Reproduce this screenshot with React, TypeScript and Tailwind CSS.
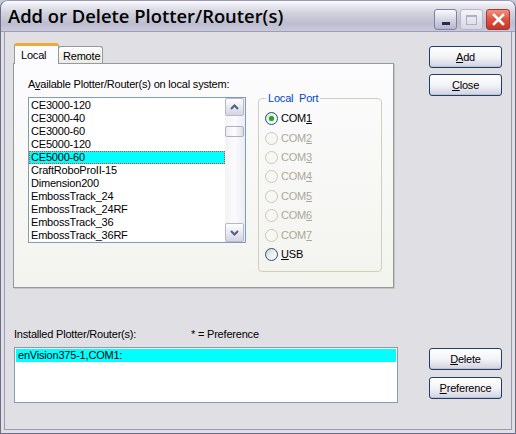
import React from "react";

const font = { fontFamily: '"Liberation Sans", Arial, sans-serif' };

function XPButton({ u, rest }: { u: string; rest: string }) {
  return (
    <div className="w-[73px] h-[22px] rounded-[3px] border border-[#1c3f6e] bg-gradient-to-b from-[#ffffff] via-[#f3f3f7] to-[#d2d2e0] flex items-center justify-center text-[11px] leading-[13px] text-black shadow-[inset_0_-1px_0_#c0c0d0]">
      <span>
        <u className="underline-offset-[1px]">{u}</u>
        {rest}
      </span>
    </div>
  );
}

function Radio({ label, u, checked, disabled }: { label: string; u: string; checked?: boolean; disabled?: boolean }) {
  return (
    <div className="h-[19.43px] flex items-center">
      <div
        className={
          "w-[13px] h-[13px] rounded-full border flex items-center justify-center " +
          (disabled
            ? "border-[#cac8bb] bg-[#f7f7f3]"
            : "border-[#1c5180] bg-gradient-to-br from-[#dcdcd6] via-[#f4f4f0] to-[#ffffff]")
        }
      >
        {checked && <div className="w-[5px] h-[5px] rounded-full bg-[#22a822] shadow-[0_0_1px_#5fcf5f]" />}
      </div>
      <span className={"ml-[3px] text-[11px] leading-[13px] " + (disabled ? "text-[#aca899]" : "text-black")}>
        {label}
        <u>{u}</u>
      </span>
    </div>
  );
}

function Chevron({ up }: { up?: boolean }) {
  return (
    <svg width="9" height="6" viewBox="0 0 9 6">
      <path
        d={up ? "M1 5 L4.5 1.5 L8 5" : "M1 1 L4.5 4.5 L8 1"}
        fill="none"
        stroke="#4d6185"
        strokeWidth="2"
      />
    </svg>
  );
}

export default function App() {
  const items = [
    "CE3000-120",
    "CE3000-40",
    "CE3000-60",
    "CE5000-120",
    "CE5000-60",
    "CraftRoboProII-15",
    "Dimension200",
    "EmbossTrack_24",
    "EmbossTrack_24RF",
    "EmbossTrack_36",
    "EmbossTrack_36RF",
  ];
  return (
    <div style={font} className="w-[516px] h-[434px] flex flex-col bg-[#c8c8d8] tracking-[-0.2px]">
      <div className="w-[516px] h-[434px] flex flex-col rounded-t-[8px] overflow-hidden border border-[#6b6b8c] border-t-[#9a9ab8]">
        {/* Title bar */}
        <div className="h-[30px] shrink-0 flex items-center bg-[linear-gradient(to_bottom,#fefeff_0%,#ececf3_12%,#d2d2de_40%,#bdbdd0_75%,#cacadb_100%)]">
          <span
            className="ml-[7px] text-[18.4px] leading-[22px] text-black tracking-[0px]"
            style={{ fontFamily: '"Open Sans", "DejaVu Sans", sans-serif', fontWeight: 600 }}
          >
            Add or Delete Plotter/Router(s)
          </span>
          <div className="ml-auto mr-[5px] mt-[7px] flex gap-[3px]">
            <div className="w-[23px] h-[21px] rounded-[3px] border border-[#8080a0] bg-gradient-to-b from-[#fafafd] via-[#d6d6e4] to-[#b4b4cc] flex items-end justify-center pb-[4px]">
              <div className="w-[8px] h-[3px] bg-[#2b2b45]" />
            </div>
            <div className="w-[23px] h-[21px] rounded-[3px] border border-[#b8b8cc] bg-gradient-to-b from-[#f4f4f8] to-[#d8d8e4] flex items-center justify-center">
              <div className="w-[11px] h-[10px] border border-[#b0b0c4] border-t-[2px]" />
            </div>
            <div className="w-[24px] h-[21px] rounded-[3px] border border-[#a03838] bg-gradient-to-b from-[#f0907e] via-[#e0503e] to-[#c83424] flex items-center justify-center">
              <svg width="13" height="13" viewBox="0 0 13 13">
                <path d="M2 2 L11 11 M11 2 L2 11" stroke="white" strokeWidth="2.6" strokeLinecap="square" />
              </svg>
            </div>
          </div>
        </div>
        {/* Client */}
        <div className="flex-1 flex bg-[#e0dfe3] border-t border-[#9c9cb8]">
          <div className="flex-1 mx-[3px] mb-[3px] border-x border-b border-[#9a9ab4] bg-[#e0dfe3] pl-[8px] pt-[11px] flex flex-col">
            {/* top row */}
            <div className="flex">
              <div className="w-[381px] flex flex-col">
                <div className="h-[20px] flex items-end pl-[1px]">
                  <div className="relative z-10 -mb-[1px] w-[45px] h-[21px] rounded-t-[3px] border-x border-[#919b9c] border-t-[3px] border-t-[#f2a73a] bg-[#fcfcfe] text-[11px] leading-[13px] text-black pl-[6px] pt-[3px]">
                    Local
                  </div>
                  <div className="w-[45px] h-[17px] -ml-[1px] rounded-t-[3px] border border-b-0 border-[#919b9c] bg-gradient-to-b from-[#ffffff] to-[#ebeae6] text-[11px] leading-[13px] text-black pl-[4px] pt-[3px]">
                    Remote
                  </div>
                </div>
                <div className="h-[225px] border border-[#919b9c] bg-gradient-to-b from-[#fcfcfe] to-[#f3f3ee] shadow-[1px_1px_0_#c4c6c0] pl-[14px] pt-[14px] flex">
                  <div className="flex flex-col">
                    <div className="text-[11px] leading-[13px] text-black whitespace-nowrap">
                      A<u>v</u>ailable Plotter/Router(s) on local system:
                    </div>
                    <div className="mt-[6px] w-[218px] h-[146px] border border-[#7f9db9] bg-white flex">
                      <div className="w-[196px] flex flex-col pt-[1px]">
                        {items.map((it) => (
                          <div
                            key={it}
                            className={
                              "h-[13px] text-[11px] whitespace-nowrap " +
                              (it === "CE5000-60"
                                ? "bg-[#00ffff] border border-dotted border-[#ff3030] pl-[1px] leading-[11px] text-black"
                                : "leading-[13px] pl-[2px] text-black")
                            }
                          >
                            {it}
                          </div>
                        ))}
                      </div>
                      <div className="w-[20px] h-full flex flex-col bg-gradient-to-r from-[#f3f3f6] via-[#fbfbfd] to-[#ececf2]">
                        <div className="h-[18px] w-[19px] rounded-[2px] border border-[#b8b8cc] bg-gradient-to-b from-[#ffffff] to-[#d4d4e2] flex items-center justify-center">
                          <Chevron up />
                        </div>
                        <div className="mt-[10px] h-[11px] w-[19px] rounded-[2px] border border-[#b0b0c4] bg-gradient-to-r from-[#ececf2] via-[#ffffff] to-[#dcdce6]" />
                        <div className="flex-1" />
                        <div className="h-[19px] w-[19px] rounded-[2px] border border-[#b8b8cc] bg-gradient-to-b from-[#ffffff] to-[#d4d4e2] flex items-center justify-center">
                          <Chevron />
                        </div>
                      </div>
                    </div>
                  </div>
                  <fieldset className="ml-[12px] mt-[14px] w-[124px] h-[180px] border border-[#d0d0bf] rounded-[4px] pl-[6px]">
                    <legend className="ml-[1px] px-[2px] text-[11px] leading-[13px] text-[#0046d5] whitespace-pre">
                      Local  Port
                    </legend>
                    <div className="pt-[4px] flex flex-col">
                      <Radio label="COM" u="1" checked />
                      <Radio label="COM" u="2" disabled />
                      <Radio label="COM" u="3" disabled />
                      <Radio label="COM" u="4" disabled />
                      <Radio label="COM" u="5" disabled />
                      <Radio label="COM" u="6" disabled />
                      <Radio label="COM" u="7" disabled />
                      <div className="h-[19.43px] flex items-center">
                        <div className="w-[13px] h-[13px] rounded-full border border-[#1c5180] bg-gradient-to-br from-[#d4d4ce] via-[#eeeeea] to-[#ffffff]" />
                        <span className="ml-[3px] text-[11px] leading-[13px] text-black">
                          <u>U</u>SB
                        </span>
                      </div>
                    </div>
                  </fieldset>
                </div>
              </div>
              <div className="ml-[35px] mt-[3px] flex flex-col gap-[6px]">
                <XPButton u="A" rest="dd" />
                <XPButton u="C" rest="lose" />
              </div>
            </div>
            {/* bottom */}
            <div className="mt-[40px] ml-[1px] flex text-[11px] leading-[13px] text-black">
              <span className="w-[177px]">Installed Plotter/Router(s):</span>
              <span>* = Preference</span>
            </div>
            <div className="mt-[6px] ml-[1px] flex">
              <div className="w-[384px] h-[56px] border border-[#7f9db9] bg-white p-[1px]">
                <div className="h-[13px] bg-[#00ffff] text-[11px] leading-[13px] pl-[2px] text-black">
                  enVision375-1,COM1:
                </div>
              </div>
              <div className="ml-[31px] mt-[1px] flex flex-col gap-[7px]">
                <XPButton u="D" rest="elete" />
                <XPButton u="P" rest="reference" />
              </div>
            </div>
          </div>
        </div>
      </div>
    </div>
  );
}
